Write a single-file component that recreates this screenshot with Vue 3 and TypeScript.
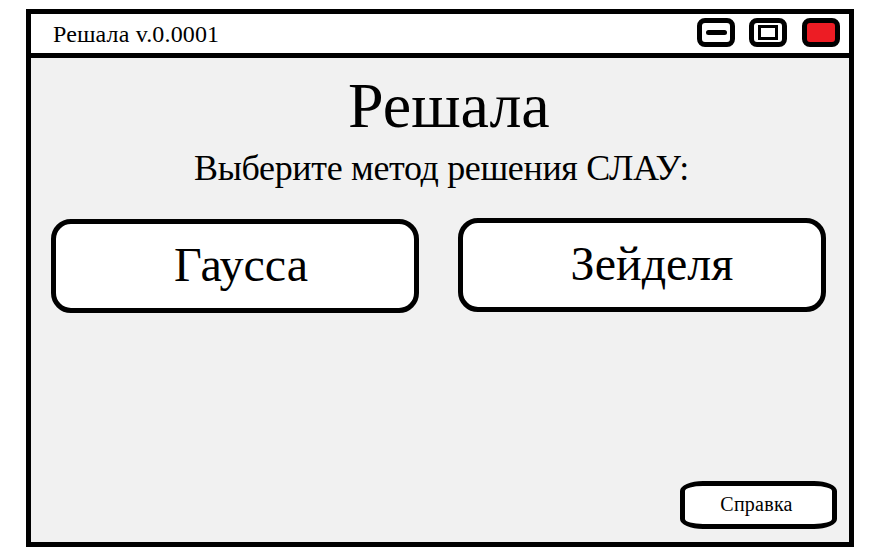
<script setup lang="ts">
import { ref } from 'vue'

interface Method {
  id: string
  label: string
}

const title = 'Решала'
const version = 'v.0.0001'
const methods: Method[] = [
  { id: 'gauss', label: 'Гаусса' },
  { id: 'seidel', label: 'Зейделя' },
]
const selected = ref<string | null>(null)
</script>

<template>
  <main class="window">
    <header class="titlebar">
      <span class="caption">{{ title }} {{ version }}</span>
      <div class="controls">
        <button class="control minimize" type="button" aria-label="Свернуть">
          <svg width="38" height="29" viewBox="0 0 38 29">
            <path d="M11.5 14.5H27.5" stroke="#000" stroke-width="5" stroke-linecap="round" />
          </svg>
        </button>
        <button class="control maximize" type="button" aria-label="Развернуть">
          <svg width="38" height="29" viewBox="0 0 38 29">
            <rect x="10.5" y="8.5" width="17" height="12" fill="none" stroke="#000" stroke-width="3" />
          </svg>
        </button>
        <button class="control close" type="button" aria-label="Закрыть"></button>
      </div>
    </header>
    <section class="content">
      <h1 class="heading">{{ title }}</h1>
      <p class="prompt">Выберите метод решения СЛАУ:</p>
      <div class="methods">
        <button
          v-for="method in methods"
          :key="method.id"
          type="button"
          class="method"
          :class="method.id"
          :aria-pressed="selected === method.id"
          @click="selected = method.id"
        >
          <span>{{ method.label }}</span>
        </button>
      </div>
      <footer class="footer">
        <button class="help" type="button">Справка</button>
      </footer>
    </section>
  </main>
</template>

<style>
body {
  background: #fff;
}
</style>

<style scoped>
.window {
  box-sizing: border-box;
  width: 828px;
  height: 538px;
  margin: 9px 0 0 26px;
  border: 5px solid #000;
  display: flex;
  flex-direction: column;
  background: #f1f1f1;
  color: #000;
  font-family: 'Liberation Serif', 'Times New Roman', serif;
}

button {
  box-sizing: border-box;
  margin: 0;
  padding: 0;
  border: 5px solid #000;
  background: #fff;
  color: inherit;
  font-family: inherit;
}

.titlebar {
  box-sizing: border-box;
  height: 44px;
  flex: none;
  display: flex;
  align-items: flex-start;
  justify-content: space-between;
  padding: 4px 9px 0 22px;
  border-bottom: 5px solid #000;
  background: #fff;
}

.caption {
  font-size: 24px;
  letter-spacing: 0.14px;
  line-height: 32px;
  white-space: nowrap;
}

.controls {
  display: flex;
  gap: 14px;
}

.control {
  width: 38px;
  height: 29px;
  border-radius: 8px;
}

.control svg {
  display: block;
  margin: -5px;
}

.close {
  margin-left: 1px;
  background: #ed1c24;
}

.content {
  flex: 1;
  display: flex;
  flex-direction: column;
  padding: 12px 12px 13px 20px;
}

.heading {
  margin: 0;
  padding-left: 297px;
  font-size: 64px;
  font-weight: 400;
  line-height: 72px;
}

.prompt {
  margin: 6px 0 0;
  padding-left: 143px;
  font-size: 36px;
  letter-spacing: -0.34px;
  line-height: 40px;
  white-space: nowrap;
}

.methods {
  display: flex;
  gap: 39px;
  margin-top: 30px;
}

.method {
  width: 368px;
  height: 94px;
  border-radius: 20px;
  font-size: 48px;
  line-height: 56px;
  padding-bottom: 2px;
}

.gauss {
  margin-top: 1px;
  padding-left: 12px;
}

.seidel {
  padding-left: 20px;
}

.footer {
  display: flex;
  justify-content: flex-end;
  margin-top: auto;
}

.help {
  width: 157px;
  height: 48px;
  padding: 0 4px 2px 0;
  border-radius: 23px / 10px;
  font-size: 20px;
  letter-spacing: 0.25px;
  line-height: 24px;
}
</style>
